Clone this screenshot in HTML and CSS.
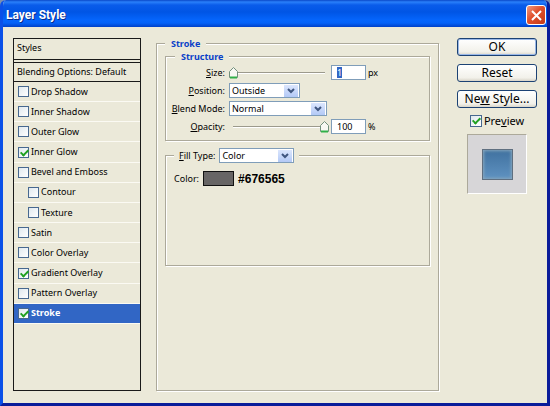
FILE: index.html
```html
<!DOCTYPE html>
<html lang="en">
<head>
  <meta charset="UTF-8" />
  <title>Layer Style</title>
  <link rel="stylesheet" href="styles.css">
</head>
<body>
  <div class="window">
    <header class="titlebar">
      <h1>Layer Style</h1>
      <button class="close" aria-label="Close">
        <svg viewBox="0 0 19 19" width="19" height="19"><path d="M5 5L14 14M14 5L5 14" stroke="#fff" stroke-width="2" /></svg>
      </button>
    </header>

    <form class="content">
      <div class="styles">
        <div class="styles-title">Styles</div>
        <div class="styles-blending">Blending Options: Default</div>
        <div class="effects">
          <label class="effect"><input type="checkbox" />Drop Shadow</label>
          <label class="effect"><input type="checkbox" />Inner Shadow</label>
          <label class="effect"><input type="checkbox" />Outer Glow</label>
          <label class="effect"><input type="checkbox" checked />Inner Glow</label>
          <label class="effect"><input type="checkbox" />Bevel and Emboss</label>
          <label class="effect child"><input type="checkbox" />Contour</label>
          <label class="effect child"><input type="checkbox" />Texture</label>
          <label class="effect"><input type="checkbox" />Satin</label>
          <label class="effect"><input type="checkbox" />Color Overlay</label>
          <label class="effect"><input type="checkbox" checked />Gradient Overlay</label>
          <label class="effect"><input type="checkbox" />Pattern Overlay</label>
          <label class="effect selected"><input type="checkbox" checked />Stroke</label>
        </div>
      </div>

      <fieldset class="stroke">
        <legend class="main-legend">Stroke</legend>

        <fieldset class="structure">
          <legend>Structure</legend>
          <div class="row">
            <label for="size"><u>S</u>ize:</label>
            <input type="range" id="sizeSlider" aria-label="Size" min="1" max="250" value="1" />
            <span class="number"><input type="text" id="size" value="1" class="highlight" /></span>
            <span>px</span>
          </div>
          <div class="row">
            <label for="position"><u>P</u>osition:</label>
            <span class="select short">
              <select id="position"><option>Outside</option><option>Inside</option><option>Center</option></select>
              <svg viewBox="0 0 14 12" width="14" height="12"><path d="M4 4L7 7L10 4" /></svg>
            </span>
          </div>
          <div class="row">
            <label for="blend"><u>B</u>lend Mode:</label>
            <span class="select long">
              <select id="blend"><option>Normal</option><option>Multiply</option><option>Screen</option></select>
              <svg viewBox="0 0 14 12" width="14" height="12"><path d="M4 4L7 7L10 4" /></svg>
            </span>
          </div>
          <div class="row">
            <label for="opacity"><u>O</u>pacity:</label>
            <input type="range" id="opacitySlider" aria-label="Opacity" min="0" max="100" value="100" />
            <span class="number"><input type="text" id="opacity" value="100" /></span>
            <span>%</span>
          </div>
        </fieldset>

        <fieldset class="fill">
          <legend>
            <label for="fill"><u>F</u>ill Type:</label>
            <span class="select medium">
              <select id="fill"><option>Color</option><option>Gradient</option><option>Pattern</option></select>
              <svg viewBox="0 0 14 12" width="14" height="12"><path d="M4 4L7 7L10 4" /></svg>
            </span>
          </legend>
          <div class="color">
            <label for="swatch">Color:</label>
            <button type="button" class="swatch" id="swatch"></button>
            <strong>#676565</strong>
          </div>
        </fieldset>
      </fieldset>

      <div class="actions">
        <button type="button" class="default">OK</button>
        <button type="button">Reset</button>
        <button type="button">Ne<u>w</u> Style...</button>
        <label class="preview"><input type="checkbox" checked />Pre<u>v</u>iew</label>
        <div class="thumb"><div class="sample"></div></div>
      </div>
    </form>
  </div>
</body>
</html>
```
FILE: styles.css
```css
* {
  box-sizing: border-box;
}

body {
  margin: 0;
  font-family: 'Noto Sans', 'Open Sans', sans-serif;
  font-size: 9px;
  line-height: 14px;
  color: #000;
  background: #7b8fae;
}

input, select, button {
  font: inherit;
  color: inherit;
  margin: 0;
}

.window {
  min-height: 100vh;
  display: flex;
  flex-direction: column;
  border: 3px solid #0a1c9a;
  border-top: 0;
  border-left-color: #0a50e8;
  border-radius: 6px 6px 0 0;
  background: #ebe9d9;
  overflow: hidden;
}

.titlebar {
  height: 27px;
  display: flex;
  align-items: center;
  justify-content: space-between;
  padding: 2px 1px 0 3px;
  background: linear-gradient(#0a48c8, #2a80fa 2px, #0a5cea 5px, #0055e5 12px, #0565fc 20px, #0462f8 23px, #0040c8);
}

.titlebar h1 {
  margin: 0;
  font-family: Roboto, 'Noto Sans', sans-serif;
  font-size: 12px;
  line-height: 16px;
  color: #fff;
  text-shadow: 1px 1px 0 #0a2c8a;
}

.close {
  width: 20px;
  height: 20px;
  padding: 0;
  border: 1px solid #fff;
  border-radius: 3px;
  background: linear-gradient(135deg, #f09a80, #e0502c 45%, #c23a18);
}

.close svg {
  display: block;
}

.content {
  flex: 1;
  display: flex;
  align-items: stretch;
  padding: 11px 10px 12px;
}

/* effect list */

.styles {
  width: 128px;
  border: 1px solid #1a1a1a;
}

.styles-title {
  height: 24px;
  padding: 2px 3px 0;
  border-bottom: 4px double #1a1a1a;
}

.styles-blending {
  height: 19px;
  padding: 2px 3px 0;
  border-bottom: 1px solid #1a1a1a;
  white-space: nowrap;
}

.effects {
  height: 242px;
  display: grid;
  grid-auto-rows: 1fr;
}

.effect {
  display: flex;
  align-items: center;
  gap: 2px;
  padding-left: 4px;
  border-bottom: 1px solid #fbfaf3;
}

.child {
  padding-left: 14px;
}

.selected {
  color: #fff;
  font-weight: bold;
  background: #3166c5;
}

input[type="checkbox"] {
  appearance: none;
  flex: none;
  width: 11px;
  height: 11px;
  border: 1px solid #47688f;
  background: linear-gradient(135deg, #dfe8ee, #fff);
}

input[type="checkbox"]:checked::after {
  content: "";
  display: block;
  width: 3px;
  height: 6px;
  margin: 0 0 0 3px;
  border: solid #21a121;
  border-width: 0 2px 2px 0;
  transform: rotate(45deg);
}

/* groups */

fieldset {
  min-width: 0;
  margin: 0;
  padding: 0;
  border: 1px solid #aca99a;
  box-shadow: 1px 1px 0 #fff, inset 1px 1px 0 #fff;
}

legend {
  margin-left: 9px;
  padding: 0 6px;
  line-height: 13px;
  color: #0a3fc8;
  font-weight: bold;
  background: #ebe9d9;
}

.main-legend {
  margin-left: 0;
}

.stroke {
  flex: 1;
  margin: -1px 18px 0 15px;
  padding: 0 8px;
}

.structure {
  height: 91px;
  padding: 2px 0 0;
}

.row {
  height: 15px;
  display: flex;
  align-items: center;
  margin-bottom: 3px;
}

.row label {
  width: 59px;
  margin-right: 4px;
  text-align: right;
  white-space: nowrap;
}

.row span {
  line-height: 13px;
}

input[type="range"] {
  appearance: none;
  flex: 1;
  min-width: 0;
  max-width: 100px;
  height: 13px;
  background: linear-gradient(#9c9a8c, #9c9a8c) 4px 6px / calc(100% - 8px) 1px no-repeat,
    linear-gradient(#fff, #fff) 4px 7px / calc(100% - 8px) 1px no-repeat;
}

input[type="range"]::-webkit-slider-thumb {
  appearance: none;
  width: 9px;
  height: 12px;
  background: url("data:image/svg+xml,%3Csvg xmlns='http://www.w3.org/2000/svg' width='9' height='12'%3E%3Cpath d='M.5 10.5V4.5L4.5.5L8.5 4.5V10.5Z' fill='%23f8f8f3' stroke='%2372907c'/%3E%3Cpath d='M1 10.5H8' stroke='%2330b048' stroke-width='2'/%3E%3C/svg%3E");
}

.number {
  flex: none;
  margin: 0 2px;
}

.number input {
  display: block;
  width: 35px;
  height: 15px;
  padding: 0 0 0 5px;
  border: 1px solid #7f9db9;
  background: #fff;
}

.number .highlight {
  color: #fff;
  background: linear-gradient(#3166c5, #3166c5) 5px 1px / 5px 11px no-repeat #fff;
}

.select {
  flex: none;
  display: inline-grid;
  grid-template-columns: 1fr 16px;
  align-items: center;
}

.select select {
  grid-area: 1 / 1 / 2 / 3;
  height: 15px;
  padding: 0 0 0 2px;
  appearance: none;
  border: 1px solid #7f9db9;
  border-radius: 0;
  line-height: 12px;
  background: #fff;
}

.select svg {
  grid-area: 1 / 2;
  background: linear-gradient(#dbe6fd, #b3c9f6);
  pointer-events: none;
}

.select path {
  fill: none;
  stroke: #3f567f;
  stroke-width: 2;
}

.short {
  width: 71px;
}

.medium {
  width: 75px;
}

.long {
  width: 98px;
}

.fill {
  height: 118px;
  margin-top: 7px;
}

.fill legend {
  display: flex;
  align-items: center;
  gap: 4px;
  margin-left: 8px;
  padding: 0 5px;
  color: inherit;
  font-weight: normal;
}

.color {
  display: flex;
  align-items: center;
  gap: 4px;
  padding: 8px 8px 0;
}

.swatch {
  width: 31px;
  height: 15px;
  padding: 0;
  border: 1px solid #111;
  background: #676565;
}

.color strong {
  font-family: 'Liberation Sans', Arial, sans-serif;
  font-size: 12px;
}

/* buttons and preview */

.actions {
  width: 80px;
  display: flex;
  flex-direction: column;
  align-items: center;
  font-size: 12px;
}

.actions button {
  width: 100%;
  height: 18px;
  margin-bottom: 8px;
  padding: 0;
  border: 1px solid #1c4274;
  border-radius: 3px;
  line-height: 14px;
  background: linear-gradient(#fff, #f2f1ea 80%, #d8d4c8);
}

.actions .default {
  box-shadow: inset 0 0 0 1px #9ab8e8;
}

.preview {
  display: flex;
  align-items: center;
  margin: -2px 0 6px;
  font-size: 11px;
}

.preview input[type="checkbox"] {
  width: 12px;
  height: 12px;
  margin-right: 2px;
}

.thumb {
  width: 60px;
  height: 60px;
  display: grid;
  place-items: center;
  border: 1px solid #aca99a;
  border-color: #aca99a #fff #fff #aca99a;
  background: #d7d6d8;
}

.sample {
  width: 31px;
  height: 31px;
  border: 1px solid #5f6f80;
  background: linear-gradient(#40719f, #5f92c1);
  box-shadow: inset 0 0 3px 1px #86a6bd;
}
```
